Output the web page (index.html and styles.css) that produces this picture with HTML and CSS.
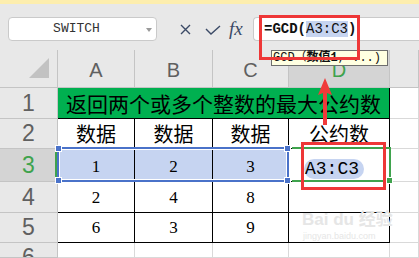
FILE: index.html
```html
<!DOCTYPE html>
<html lang="zh-CN">
<head>
<meta charset="UTF-8">
<title>GCD</title>
<link rel="stylesheet" href="styles.css">
</head>
<body>

<div class="topband"></div>

<div class="toolbar">
  <div class="namebox">SWITCH<span class="caret"></span></div>
  <svg class="ico-x" width="11" height="11" viewBox="0 0 11 11">
    <path d="M1 1 L10 10 M10 1 L1 10" stroke="#3b4a66" stroke-width="1.4" fill="none"/>
  </svg>
  <svg class="ico-ok" width="16" height="10" viewBox="0 0 16 10">
    <path d="M1 4 L6 9 L15 1" stroke="#3b4a66" stroke-width="1.4" fill="none"/>
  </svg>
  <span class="fx">fx</span>
  <div class="formula"><b>=GCD(</b><span class="ref">A3:C3</span><b>)</b></div>
</div>

<div class="sheet">
  <div class="hd corner"><span class="tri"></span></div>
  <div class="hd col">A</div>
  <div class="hd col">B</div>
  <div class="hd col">C</div>
  <div class="hd col active">D</div>
  <div class="hd col"></div>

  <div class="hd row">1</div>
  <div class="cell title">返回两个或多个整数的最大公约数</div>
  <div class="cell"></div>

  <div class="hd row">2</div>
  <div class="cell data">数据</div>
  <div class="cell data">数据</div>
  <div class="cell data">数据</div>
  <div class="cell data">公约数</div>
  <div class="cell"></div>

  <div class="hd row active">3</div>
  <div class="cell data num sel">1</div>
  <div class="cell data num sel">2</div>
  <div class="cell data num sel">3</div>
  <div class="cell data edit"><span class="pill">A3:C3</span></div>
  <div class="cell"></div>

  <div class="hd row">4</div>
  <div class="cell data num">2</div>
  <div class="cell data num">4</div>
  <div class="cell data num">8</div>
  <div class="cell data"></div>
  <div class="cell"></div>

  <div class="hd row">5</div>
  <div class="cell data num">6</div>
  <div class="cell data num">3</div>
  <div class="cell data num">9</div>
  <div class="cell data"></div>
  <div class="cell"></div>

  <div class="hd row last">6</div>
  <div class="cell"></div>
  <div class="cell"></div>
  <div class="cell"></div>
  <div class="cell"></div>
  <div class="cell"></div>
</div>

<!-- overlays: selection, tooltip, annotations -->
<div class="sel-box"><i class="h tl"></i><i class="h bl"></i><i class="h tr"></i><i class="h br"></i></div>
<div class="act-box"><i class="gh"></i></div>

<div class="watermark">
  <div class="wm-big">Bai du 经验</div>
  <div class="wm-small">jingyan.baidu.com</div>
</div>

<div class="tip">GCD（<b>数值1</b>, ...)</div>

<div class="mark mark-formula"></div>
<div class="mark mark-cell"></div>

<svg class="arrow" width="18" height="50" viewBox="0 0 18 50">
  <path d="M9 1 L16 18 L11 16 L11 48 L7 48 L7 16 L2 18 Z" fill="#f03a3a"/>
</svg>

</body>
</html>
```

FILE: styles.css
```css
body {
    margin: 0;
    width: 419px;
    height: 258px;
    overflow: hidden;
    position: relative;
    background: #fff;
    font-family: "Liberation Sans", sans-serif;
}

.topband {
    height: 4px;
    background: #fdeeae;
}

.toolbar {
    height: 46px;
    box-sizing: border-box;
    padding: 13px 0 0 8px;
    display: flex;
    align-items: flex-start;
    background: #e8e8e8;
}

.namebox {
    width: 149px;
    height: 24px;
    box-sizing: border-box;
    border: 1px solid #cacaca;
    border-radius: 4px;
    background: #fff;
    position: relative;
    padding-right: 12px;
    font: 13px/22px "Liberation Mono", monospace;
    color: #333;
    text-align: center;
}
.caret {
    position: absolute;
    right: 4px;
    top: 10px;
    border-left: 3px solid transparent;
    border-right: 3px solid transparent;
    border-top: 4px solid #9a9a9a;
}

.ico-x { margin: 7px 0 0 23px; }
.ico-ok { margin: 8px 0 0 14px; }

.fx {
    margin: 1px 0 0 8px;
    width: 16px;
    font: italic 19px/22px "Liberation Serif", serif;
    color: #3b4a66;
}

.formula {
    flex: 1;
    margin-left: 8px;
    height: 24px;
    box-sizing: border-box;
    border: 1px solid #cacaca;
    border-right: none;
    border-radius: 4px 0 0 4px;
    background: #fff;
    padding-left: 10px;
    font: 14px/22px "Liberation Mono", "Noto Sans CJK SC", monospace;
    color: #111;
}
.formula .ref {
    background: #c6d4f0;
}

/* sheet grid */
.sheet {
    display: grid;
    grid-template-columns: 58px 77px 78px 76px 101px 29px;
    grid-template-rows: 38px 31px 30px 33px 31px 30px 15px;
    overflow: hidden;
}
.sheet > div {
    box-sizing: border-box;
    border-right: 1px solid #d9d9d9;
    border-bottom: 1px solid #d9d9d9;
    display: flex;
    align-items: center;
    justify-content: center;
}

.hd {
    background: #e8e8e8;
    color: #606060;
    border-color: #c4c4c4 !important;
}
.hd.col {
    font-size: 20px;
    padding-top: 3px;
}
.hd.row {
    font-size: 23px;
}
.hd.row.last {
    align-items: flex-start !important;
    line-height: 28px;
    overflow: hidden;
}
.hd.active {
    background: #d4d4d4;
    color: #3fa34d;
}
.hd.row.active {
    box-shadow: inset -2px 0 0 #3fa34d;
}
.corner {
    justify-content: flex-end !important;
    align-items: flex-end !important;
    padding: 0 8px 9px 0;
}
.tri {
    width: 0;
    height: 0;
    border-left: 20px solid transparent;
    border-bottom: 20px solid #c2c2c2;
}

.cell {
    font-family: "Noto Sans CJK SC", sans-serif;
    color: #000;
}
.title {
    grid-column: span 4;
    background: #00b050;
    font-size: 21px;
    border-color: #000 !important;
}
.data {
    font-size: 20px;
    border-color: #000 !important;
}
.num {
    font: 17px "Liberation Serif", serif;
    align-items: flex-end !important;
    padding-bottom: 4px;
}
.sel {
    background: #c6d4f1;
}
.edit {
    justify-content: flex-start !important;
    padding: 7px 0 0 15px;
}
.pill {
    background: #c6d4f1;
    border-radius: 10px;
    padding: 0 5px 0 1px;
    height: 20px;
    font: 18px/20px "Liberation Mono", monospace;
    display: inline-block;
}

/* selection overlays */
.sel-box {
    position: absolute;
    left: 57px;
    top: 147px;
    width: 232px;
    height: 35px;
    box-sizing: border-box;
    border: 2px solid #4a72c9;
    box-shadow: inset 0 0 0 1px #fff;
}
.h {
    position: absolute;
    width: 5px;
    height: 5px;
    background: #4a72c9;
    border: 1px solid #fff;
}
.tl { left: -4px; top: -4px; }
.bl { left: -4px; bottom: -4px; }
.tr { right: -4px; top: -4px; }
.br { right: -4px; bottom: -4px; }

.act-box {
    position: absolute;
    left: 292px;
    top: 147px;
    width: 99px;
    height: 35px;
    box-sizing: border-box;
    border: 2px solid #3fa34d;
    border-left: none;
}
.gh {
    position: absolute;
    right: -4px;
    bottom: -4px;
    width: 5px;
    height: 5px;
    background: #3fa34d;
    border: 1px solid #fff;
}

.watermark {
    position: absolute;
    left: 302px;
    top: 209px;
    color: #e6e6e6;
    font-family: "Liberation Sans", "Noto Sans CJK SC", sans-serif;
}
.wm-big {
    font-size: 17px;
    font-weight: bold;
    line-height: 22px;
}
.wm-small {
    font-size: 9px;
    line-height: 10px;
    margin-left: 1px;
}

.tip {
    position: absolute;
    left: 271px;
    top: 50px;
    width: 117px;
    height: 16px;
    box-sizing: border-box;
    background: #ffffe1;
    border: 1px solid #6e6e6e;
    padding-left: 1px;
    font: 12px/14px "Liberation Mono", "Noto Sans CJK SC", monospace;
    color: #111;
    white-space: nowrap;
}

.mark {
    position: absolute;
    border: 3px solid #ee3737;
}
.mark-formula {
    left: 259px;
    top: 15px;
    width: 95px;
    height: 39px;
}
.mark-cell {
    left: 301px;
    top: 142px;
    width: 79px;
    height: 42px;
}

.arrow {
    position: absolute;
    left: 316px;
    top: 77px;
}
```
